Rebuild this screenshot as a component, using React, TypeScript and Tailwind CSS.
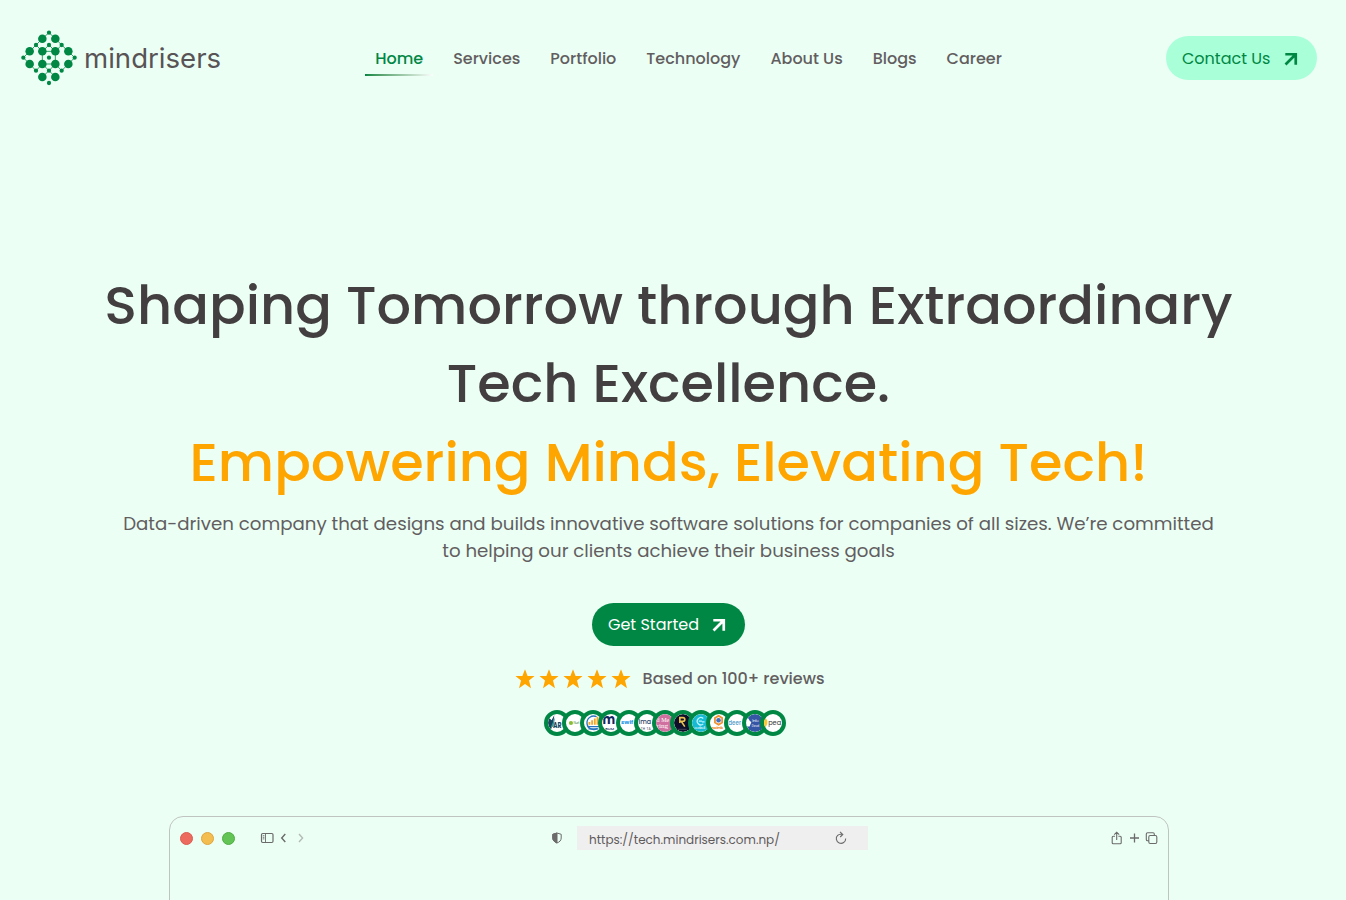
import React from "react";

const navItems = ["Home", "Services", "Portfolio", "Technology", "About Us", "Blogs", "Career"];

const bigDots = [
  [97, 56], [136, 56], [59, 94], [97, 94], [136, 94], [175, 94],
  [59, 132], [97, 132], [136, 132], [175, 132], [97, 171], [136, 171],
];
const smallDots = [
  [117, 38], [78, 75], [117, 75], [155, 75], [40, 113], [117, 113],
  [194, 113], [78, 152], [117, 152], [155, 152], [117, 189],
];

function Logo() {
  return (
    <a className="flex items-center gap-[7px]">
      <svg className="h-[56px] w-[56px]" viewBox="33 30 168 168" fill="#008744">
        <path
          d="M97 56 117 38 136 56M97 56 78 75 97 94M136 56 155 75 136 94M97 94 117 75 136 94ZM59 94 78 75M175 94 155 75M59 94 40 113 59 132M175 94 194 113 175 132M97 94V132H136V94M59 132 78 152 97 132 117 152 136 132 155 152 175 132M97 171 117 152 136 171"
          fill="none"
          stroke="#008744"
          strokeWidth="2.4"
        />
        {bigDots.map(([x, y]) => <circle key={`${x}-${y}`} cx={x} cy={y} r="12.8" />)}
        {smallDots.map(([x, y]) => <circle key={`${x}-${y}`} cx={x} cy={y} r="6.4" />)}
      </svg>
      <span className="font-['Inter',sans-serif] text-[27.6px] leading-[34px] text-[#585456]">mindrisers</span>
    </a>
  );
}

function ArrowUpRight() {
  return (
    <svg className="mt-[1px] h-[14px] w-[14px]" viewBox="0 0 14 14" fill="none" stroke="currentColor" strokeWidth="2.7">
      <path d="M1.3 2.25H11.75V12.7M11.5 2.5 1.5 12.5" />
    </svg>
  );
}

function Star() {
  return (
    <svg className="h-[20px] w-[20px]" viewBox="0 0 20 20" fill="#ffa500">
      <path d="M10 .3 12.6 7H19.6L14 11.6 16 19.2 10 15 4 19.2 6 11.6.4 7H7.4Z" />
    </svg>
  );
}

const clients = [
  <g key="0"><path d="M0 3 4 7 7 1 6 10 3 18 0 15Z" fill="#17435c" /><path d="M3 15 8 3 6 14Z" fill="#2f9aa4" /><text x="5.5" y="15.5" fontSize="9.5" fontWeight="700" fill="#174963" textLength="9.5" lengthAdjust="spacingAndGlyphs">AR</text></g>,
  <g key="1"><circle cx="5.5" cy="10" r="2.3" fill="#86bd3b" /><text x="8.4" y="11.2" fontSize="3.6" fill="#4e8d4a" textLength="6.4">Nurt</text></g>,
  <g key="2"><path d="M14 3A7.5 7.5 0 1 0 15 16" fill="none" stroke="#2875bd" strokeWidth="1.5" /><path d="M6 12V9M9 12V7M12 12V5M15 12V3" stroke="#f5a623" strokeWidth="2" /><path d="M4 14H17M5 16.5H16" stroke="#2875bd" strokeWidth="1.3" /></g>,
  <g key="3"><text x="0.6" y="11.5" fontSize="15" fontWeight="700" fill="#12265c" textLength="14" lengthAdjust="spacingAndGlyphs">m</text><text x="3.5" y="18" fontSize="3.6" fontWeight="500" fill="#293b68" textLength="10" lengthAdjust="spacingAndGlyphs">BUM</text></g>,
  <g key="4"><text x="1.2" y="11.5" fontSize="6.5" fontWeight="700" fill="#2497e8" textLength="13.5" lengthAdjust="spacingAndGlyphs">swif</text></g>,
  <g key="5"><text x="0.6" y="11.5" fontSize="8" fontWeight="500" fill="#2c426b" textLength="14" lengthAdjust="spacingAndGlyphs">ima</text><text x="3" y="17.5" fontSize="3.6" fill="#33445f" textLength="11">TH TA</text></g>,
  <g key="6"><rect width="20" height="20" fill="#d070a0" /><text x="0.6" y="9" fontSize="7" fill="#fff" fontFamily="Liberation Serif" textLength="14.2" lengthAdjust="spacingAndGlyphs">d Me</text><text x="0.6" y="16" fontSize="7" fill="#fff" fontFamily="Liberation Serif" textLength="13" lengthAdjust="spacingAndGlyphs">ring</text></g>,
  <g key="7"><rect width="20" height="20" fill="#0d0f2b" /><path d="M6.5 3V10M6.5 4H10A2 2 0 0 1 10 8H8L12 14" fill="none" stroke="#ecc34e" strokeWidth="1.8" /><path d="M4 17H14" stroke="#6b6070" strokeWidth=".7" /></g>,
  <g key="8"><rect width="20" height="20" fill="#18bad3" /><path d="M12.5 5A4 4 0 1 0 12.5 11M11 8H7.5M14 8.7H11" fill="none" stroke="#bdf6ff" strokeWidth="1.4" /><text x="2.5" y="17.2" fontSize="4" fill="#fff" textLength="12">codeoli</text></g>,
  <g key="9"><path d="M9.5 2 13.5 4.5V9.5L9.5 12 5.5 9.5V4.5Z" fill="#f4f2ff" stroke="#ef9230" strokeWidth="2" /><circle cx="9.5" cy="7" r="2.5" fill="#4771bd" /><text x="2" y="17" fontSize="4.2" fontWeight="700" fill="#ed943b" textLength="12.5">recimb</text></g>,
  <g key="10"><text x="0.3" y="12.5" fontSize="8" fontWeight="500" fill="#4a9acb" textLength="14.2" lengthAdjust="spacingAndGlyphs">deer</text></g>,
  <g key="11"><rect width="20" height="20" fill="#3456a5" /><path d="M0 4C4 4 3 8 6 9L4 14H0Z" fill="#fff" /><text x="7" y="9" fontSize="4.2" fill="#fff" textLength="7">Info</text><text x="6.5" y="14" fontSize="4.2" fill="#fff" textLength="8.2" lengthAdjust="spacingAndGlyphs">Devel</text></g>,
  <g key="12"><path d="M0 4C5 5 5 13 0 16Z" fill="#ffc629" /><text x="4.6" y="12.5" fontSize="8.5" fill="#333" textLength="14.4" lengthAdjust="spacingAndGlyphs">pea</text></g>,
];

function BrowserBar() {
  return (
    <div className="flex h-[42px] items-center pl-[10px] pr-[10px] text-[#6b6b6b]">
      <div className="flex gap-[8px]">
        <span className="size-[13px] rounded-full border border-[#dc5a50] bg-[#ed6a5e]" />
        <span className="size-[13px] rounded-full border border-[#dfa53c] bg-[#f4bd50]" />
        <span className="size-[13px] rounded-full border border-[#50ad43] bg-[#61c455]" />
      </div>
      <svg className="ml-[25px] h-[14px] w-[46px]" viewBox="0 0 46 14" fill="none" stroke="currentColor">
        <rect x="1.5" y="2.5" width="11.5" height="9" rx="1.2" strokeWidth="1.2" />
        <path d="M5.5 2.5V11.5M2.8 4.7H4.4M2.8 6.3H4.4M2.8 7.9H4.4" strokeWidth=".9" />
        <path d="M25.3 3 21.7 7 25.3 11" strokeWidth="1.4" />
        <path d="M39 3 42.6 7 39 11" stroke="#b4bbb7" strokeWidth="1.4" />
      </svg>
      <svg className="ml-[246px] h-[12px] w-[10px]" viewBox="0 0 10 12" fill="none" stroke="currentColor">
        <path d="M5 1 9.2 2.3V6C9.2 8.5 7.5 10 5 11 2.5 10 .8 8.5.8 6V2.3Z" />
        <path d="M5 1 .8 2.3V6C.8 8.5 2.5 10 5 11Z" fill="currentColor" />
      </svg>
      <div className="ml-[15px] flex h-[24px] w-[291px] items-center justify-between bg-[#efefef] pl-[12px] pr-[20px]">
        <span className="pt-[4px] text-[12px] leading-[18px] text-[#5f5b5c]">https://tech.mindrisers.com.np/</span>
        <svg className="h-[14px] w-[14px]" viewBox="0 0 14 14" fill="none" stroke="currentColor" strokeWidth="1.1">
          <path d="M3.8 4.2A4.7 4.7 0 1 0 11.7 7.5M3.2 4.8C4.3 3.5 6 2.8 8.7 3.4M6 .8 8.8 3.5 6.2 6" />
        </svg>
      </div>
      <svg className="ml-auto h-[14px] w-[47px]" viewBox="0 0 47 14" fill="none" stroke="currentColor" strokeWidth="1.1">
        <path d="M4 5.2H2.2Q1.2 5.2 1.2 6.2V11.8Q1.2 12.8 2.2 12.8H9.2Q10.2 12.8 10.2 11.8V6.2Q10.2 5.2 9.2 5.2H7.4M5.7 9V1.3M3.2 3.6 5.7 1.2 8.2 3.6" />
        <path d="M19 7H28M23.5 2.5V11.5" strokeWidth="1.3" />
        <rect x="37.8" y="4.5" width="8" height="8" rx="1.4" />
        <path d="M37.8 9.8H36.6Q35.3 9.8 35.3 8.5V3Q35.3 1.7 36.6 1.7H42Q43.3 1.7 43.3 3V4.5" />
      </svg>
    </div>
  );
}

export default function App() {
  return (
    <div className="h-[900px] w-full overflow-hidden bg-[#ecfff5] font-['Poppins','Inter',sans-serif] text-[#625e60]">
      <div className="flex w-[1337px] flex-col items-center">
        <header className="flex h-[116px] w-full items-center pl-[21px] pr-[20px]">
          <Logo />
          <nav className="ml-[144px] flex items-center text-[16px] leading-[24px] font-medium">
            {navItems.map((item, i) =>
              i === 0 ? (
                <a key={item} className="mr-[25px] flex h-[36px] w-[63px] flex-col justify-between pl-[10px] pt-[7px] text-[#008744]">
                  {item}
                  <span className="-ml-[10px] h-[2px] w-[68px] shrink-0 bg-linear-to-r from-[#008744] to-white/80" />
                </a>
              ) : (
                <a key={item} className="mr-[30px] pt-[2px] whitespace-nowrap">{item}</a>
              ),
            )}
          </nav>
          <a className="ml-auto flex h-[44px] w-[151px] items-center gap-[14px] rounded-full bg-[#a9ffd8] pl-[16px] text-[16px] leading-[24px] whitespace-nowrap text-[#008744]">
            <span className="pt-[2px]">Contact Us</span>
            <ArrowUpRight />
          </a>
        </header>

        <main className="flex w-full flex-col items-center">
          <h1 className="mt-[150px] text-center text-[54.2px] leading-[78.4px] font-medium text-[#433f41]">
            Shaping Tomorrow through Extraordinary
            <br />
            Tech Excellence.
            <br />
            <span className="text-[#ffa500]">Empowering Minds, Elevating Tech!</span>
          </h1>
          <p className="mt-[8.8px] text-center text-[18.2px] leading-[27px]">
            Data-driven company that designs and builds innovative software solutions for companies of all sizes. We’re committed
            <br />
            to helping our clients achieve their business goals
          </p>
          <a className="mt-[39px] flex h-[43px] w-[153px] items-center gap-[13px] rounded-full bg-[#008744] pl-[16px] text-[16px] leading-[24px] whitespace-nowrap text-white">
            <span className="pt-[1px]">Get Started</span>
            <ArrowUpRight />
          </a>
          <div className="mt-[21px] ml-[2px] flex h-[24px] items-center gap-[12px]">
            <div className="flex gap-[4px]">
              {[0, 1, 2, 3, 4].map((n) => <Star key={n} />)}
            </div>
            <span className="text-[16px] leading-[24px] font-medium">Based on 100+ reviews</span>
          </div>
          <div className="mt-[19px] mr-[7px] flex">
            {clients.map((art, i) => (
              <span key={i} className="-mr-[8px] size-[26px] overflow-hidden rounded-full border-[4px] border-[#008744] bg-white last:mr-0">
                <svg className="size-full rounded-full" viewBox="0 0 20 20">{art}</svg>
              </span>
            ))}
          </div>
          <section className="mt-[80px] ml-px h-[400px] w-[1000px] rounded-t-[14px] border border-[#bfc4c1]">
            <BrowserBar />
          </section>
        </main>
      </div>
    </div>
  );
}
